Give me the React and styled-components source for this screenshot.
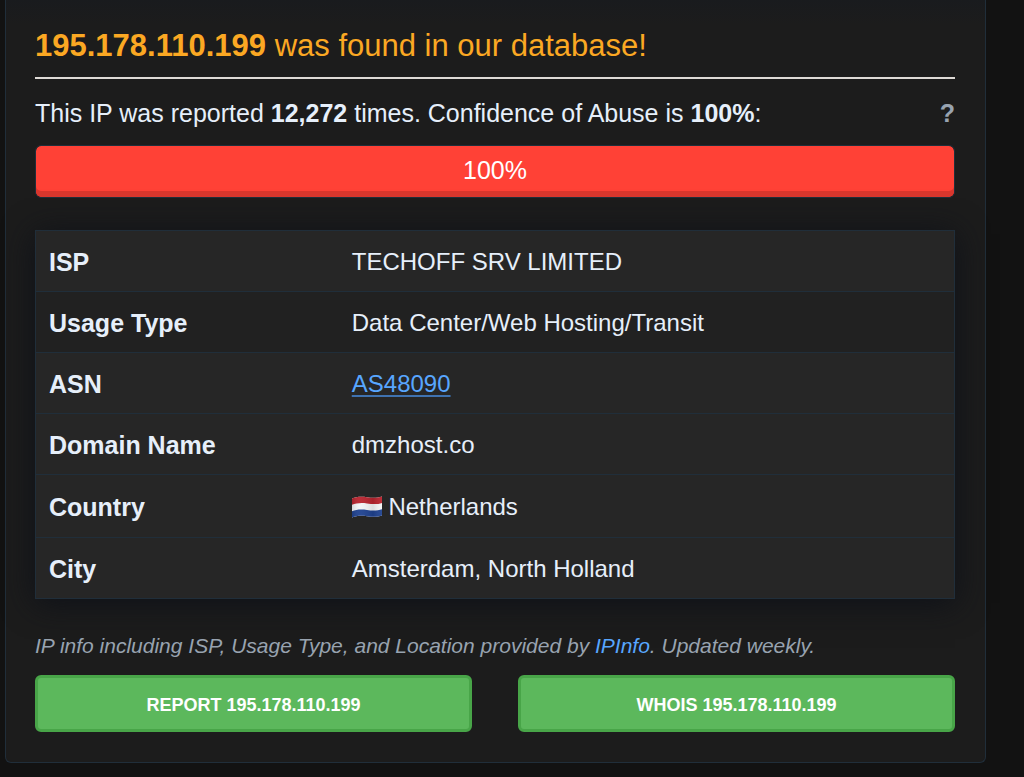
import React from 'react'
import styled, { createGlobalStyle } from 'styled-components'

const report = {
    ip: '195.178.110.199',
    reports: '12,272',
    confidence: 100,
    isp: 'TECHOFF SRV LIMITED',
    usage: 'Data Center/Web Hosting/Transit',
    asn: 'AS48090',
    domain: 'dmzhost.co',
    country: 'Netherlands',
    city: 'Amsterdam, North Holland',
}

const FlagNL = () => (
    <Flag viewBox='0 0 30 22' aria-hidden='true'>
        <defs>
            <clipPath id='wave'>
                <path d='M0 2.6C4 .8 9 .2 15 1.2S26 1.8 30 .4V19.4C26 21 21 21.2 15 20.2S4 19.8 0 21.6Z' />
            </clipPath>
            <linearGradient id='shade' x1='0' x2='1' y1='0' y2='0'>
                <stop offset='0' stopColor='#000' stopOpacity='.12' />
                <stop offset='.25' stopColor='#fff' stopOpacity='.05' />
                <stop offset='.7' stopColor='#000' stopOpacity='.1' />
                <stop offset='1' stopColor='#fff' stopOpacity='.05' />
            </linearGradient>
        </defs>
        <g clipPath='url(#wave)'>
            <rect width='30' height='22' fill='#f4f5f7' />
            <path d='M0 0H30V6.9C26 8.3 21 8.4 15 7.4S4 7.2 0 8.8Z' fill='#b9242f' />
            <path d='M0 15.2C4 13.6 9 13 15 14S26 14.6 30 13.2V22H0Z' fill='#1f4290' />
            <rect width='30' height='22' fill='url(#shade)' />
        </g>
    </Flag>
)

const App = () => {
    return (
        <>
            <GlobalStyle />
            <Page>
                <Card>
                    <Title><b>{report.ip}</b> was found in our database!</Title>
                    <Summary>
                        <span>
                            This IP was reported <b>{report.reports}</b> times. Confidence of Abuse is <b>{report.confidence}%</b>:
                        </span>
                        <Help href='#confidence'>?</Help>
                    </Summary>
                    <Track>
                        <Bar style={{ width: `${report.confidence}%` }}>{report.confidence}%</Bar>
                    </Track>
                    <Table>
                        <tbody>
                            <Row>
                                <th scope='row'>ISP</th>
                                <td>{report.isp}</td>
                            </Row>
                            <Row $dim>
                                <th scope='row'>Usage Type</th>
                                <td>{report.usage}</td>
                            </Row>
                            <Row>
                                <th scope='row'>ASN</th>
                                <td><AsnLink href='#asn'>{report.asn}</AsnLink></td>
                            </Row>
                            <Row>
                                <th scope='row'>Domain Name</th>
                                <td>{report.domain}</td>
                            </Row>
                            <Row $tall>
                                <th scope='row'>Country</th>
                                <td><FlagNL /> {report.country}</td>
                            </Row>
                            <Row>
                                <th scope='row'>City</th>
                                <td>{report.city}</td>
                            </Row>
                        </tbody>
                    </Table>
                    <Note>
                        IP info including ISP, Usage Type, and Location provided by <a href='#ipinfo'>IPInfo</a>. Updated weekly.
                    </Note>
                    <Buttons>
                        <Button type='button'>Report {report.ip}</Button>
                        <Button type='button'>Whois {report.ip}</Button>
                    </Buttons>
                </Card>
            </Page>
        </>
    )
}

const GlobalStyle = createGlobalStyle`
  *{
    box-sizing: border-box;
  }
  body{
    margin: 0;
    background: #121212;
    color: #e6effa;
    font-family: "Liberation Sans", Arial, Helvetica, sans-serif;
    font-size: 25px;
    line-height: 36px;
  }
`

const Page = styled.main`
padding: 0 38px 14px 5px;
`

const Card = styled.section`
padding: 28px 30px 30px 29px;
border: 1px solid #202e3a;
border-top: none;
border-radius: 0 0 6px 6px;
background: linear-gradient(#191b1e, #1c1c1c 24px);
`

const Title = styled.h1`
margin: 0 0 16px;
padding-bottom: 13px;
border-bottom: 2px solid #dedad6;
color: #fba823;
font-size: 31px;
font-weight: 400;
line-height: 36px;
`

const Summary = styled.div`
display: flex;
justify-content: space-between;
margin-bottom: 14px;
`

const Help = styled.a`
color: #98a3b0;
font-weight: 700;
text-decoration: none;
`

const Track = styled.div`
height: 53px;
margin-bottom: 32px;
overflow: hidden;
border: 1px solid #202e3a;
border-radius: 6px;
`

const Bar = styled.div`
height: 100%;
padding-top: 6px;
border-radius: 5px;
background: #ff4136;
box-shadow: inset 0 -6px 0 #d9372e;
color: #fff;
text-align: center;
`

const Table = styled.table`
width: 100%;
table-layout: fixed;
border-collapse: collapse;
border: 1px solid #202e3a;
box-shadow: 0 4px 30px #0e1118;
`

const Row = styled.tr`
background: ${({ $dim }) => ($dim ? '#212121' : '#262626')};
th, td{
  height: ${({ $tall }) => ($tall ? 63 : 61)}px;
  padding: 2px 13px 0;
  border-top: 1px solid #202e3a;
  text-align: left;
}
th{
  width: 33%;
}
td{
  font-size: 24px;
}
`

const AsnLink = styled.a`
color: #58a6ff;
text-decoration-thickness: 2px;
text-decoration-color: #3f72b0;
text-underline-offset: 3px;
text-decoration-skip-ink: none;
`

const Flag = styled.svg`
width: 30px;
height: 22px;
vertical-align: -3px;
`

const Note = styled.p`
margin: 32px 0 14px;
color: #98a3b0;
font-size: 21px;
font-style: italic;
line-height: 30px;
a{
  color: #58a6ff;
  text-decoration: none;
}
`

const Buttons = styled.div`
display: grid;
grid-template-columns: 1fr 1fr;
gap: 46px;
`

const Button = styled.button`
height: 57px;
padding: 4px 0 0;
border: 3px solid #48a548;
border-radius: 6px;
background: #5cb85c;
color: #fff;
font-family: inherit;
font-size: 18px;
font-weight: 700;
text-transform: uppercase;
cursor: pointer;
`

export default App
